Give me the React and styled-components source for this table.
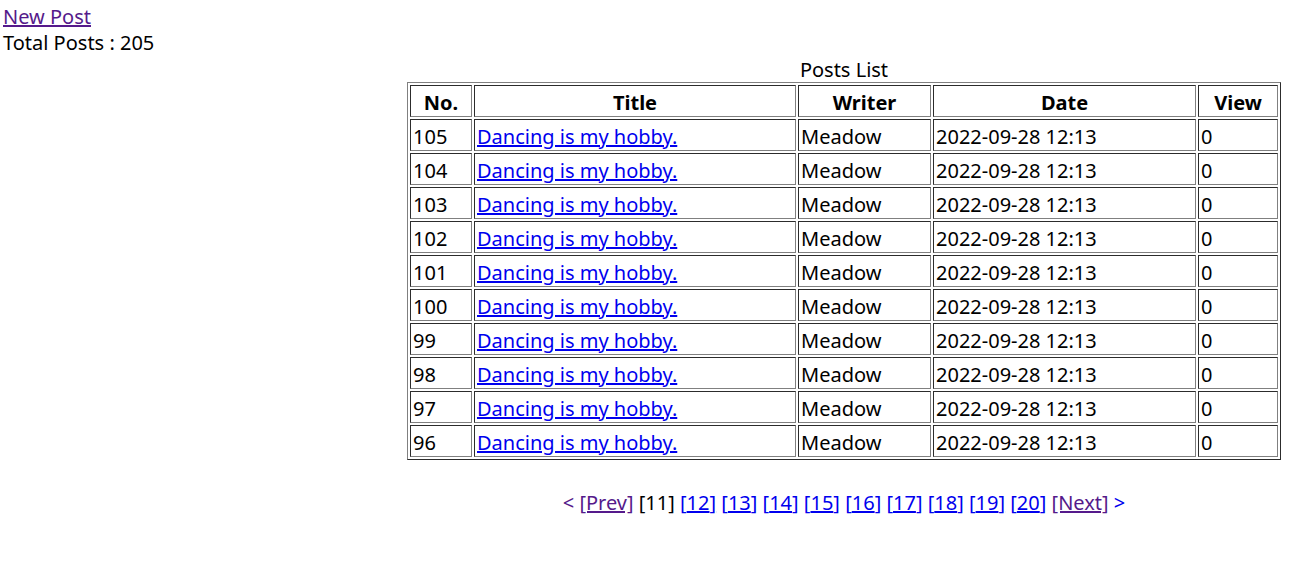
import React from 'react';
import styled, { createGlobalStyle } from 'styled-components';

const GlobalStyle = createGlobalStyle`
  body {
    margin: 0;
    padding: 4px 0 0 3px;
    font-family: "Noto Sans", "Noto Sans CJK KR", sans-serif;
    font-size: 20px;
    line-height: 26px;
    color: #000;
    background: #fff;
  }
  a { color: #0000ee; }
`;

const TopLink = styled.a`
  display: block;
  width: fit-content;
  color: #551a8b;
`;

const Total = styled.div``;

const Board = styled.div`
  width: 874px;
  margin-left: 404px;
`;

const Table = styled.table`
  width: 874px;
  table-layout: fixed;
  border: 1px outset grey;
  border-spacing: 2px;
  font-size: 20px;
`;

const Caption = styled.caption`
  padding-top: 1px;
  line-height: 25px;
`;

const Th = styled.th`
  border: 1px inset grey;
  padding: 4px 2px 0;
  line-height: 26px;
  font-weight: bold;
  text-align: center;
`;

const Td = styled.td`
  border: 1px inset grey;
  padding: 4px 2px 0;
  line-height: 26px;
  white-space: nowrap;
  overflow: hidden;
`;

const Pager = styled.div`
  margin-top: 30px;
  text-align: center;
  line-height: 26px;
`;

const Arrow = styled.a`
  text-decoration: none;
  color: ${(p) => (p.$visited ? '#551a8b' : '#0000ee')};
`;

const PageLink = styled.a`
  color: ${(p) => (p.$visited ? '#551a8b' : '#0000ee')};
`;

const Current = styled.span`
  color: #000;
`;

const rows = [105, 104, 103, 102, 101, 100, 99, 98, 97, 96];
const pages = [12, 13, 14, 15, 16, 17, 18, 19, 20];

export default function App() {
  return (
    <>
      <GlobalStyle />
      <TopLink href="#">New Post</TopLink>
      <Total>Total Posts : 205</Total>
      <Board>
        <Table>
          <Caption>Posts List</Caption>
          <colgroup>
            <col style={{ width: 62 }} />
            <col style={{ width: 322 }} />
            <col style={{ width: 133 }} />
            <col style={{ width: 263 }} />
            <col style={{ width: 80 }} />
          </colgroup>
          <thead>
            <tr>
              <Th>No.</Th>
              <Th>Title</Th>
              <Th>Writer</Th>
              <Th>Date</Th>
              <Th>View</Th>
            </tr>
          </thead>
          <tbody>
            {rows.map((n) => (
              <tr key={n}>
                <Td>{n}</Td>
                <Td>
                  <a href="#">Dancing is my hobby.</a>
                </Td>
                <Td>Meadow</Td>
                <Td>2022-09-28 12:13</Td>
                <Td>0</Td>
              </tr>
            ))}
          </tbody>
        </Table>
        <Pager>
          <Arrow href="#" $visited>&lt;</Arrow>{' '}
          <PageLink href="#" $visited>[Prev]</PageLink>{' '}
          <Current>[11]</Current>{' '}
          {pages.map((p) => (
            <React.Fragment key={p}>
              <PageLink href="#">[{p}]</PageLink>{' '}
            </React.Fragment>
          ))}
          <PageLink href="#" $visited>[Next]</PageLink>{' '}
          <Arrow href="#">&gt;</Arrow>
        </Pager>
      </Board>
    </>
  );
}
